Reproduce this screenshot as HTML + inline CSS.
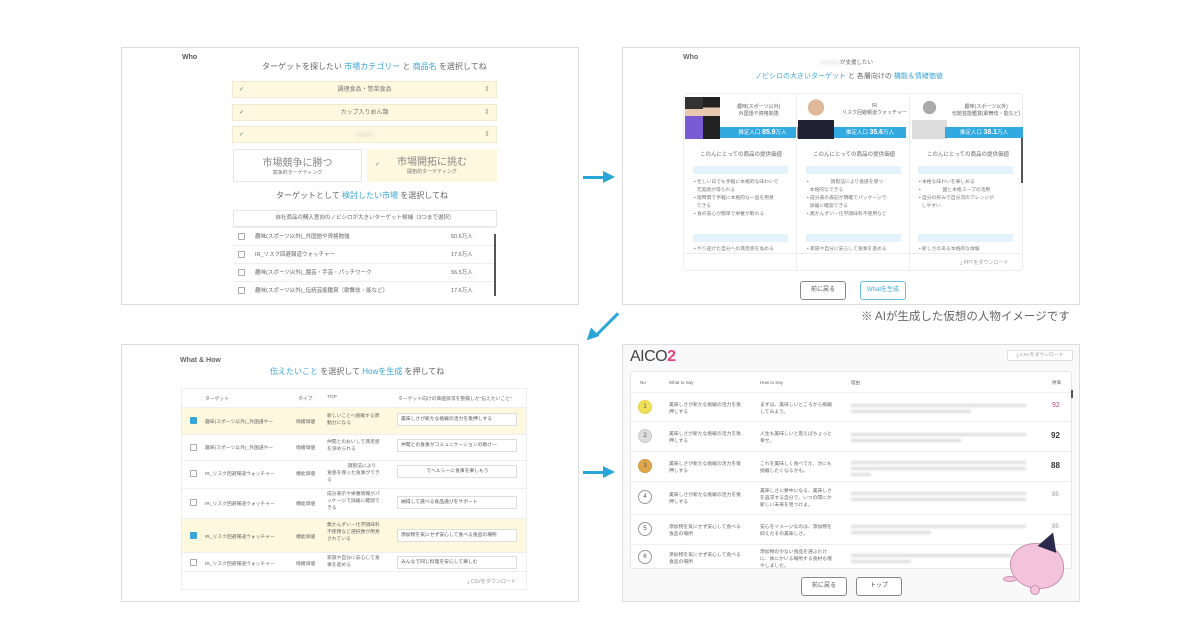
<!DOCTYPE html>
<html><head><meta charset="utf-8">
<style>
*{margin:0;padding:0;box-sizing:border-box}
body{width:1200px;height:630px;background:#fff;position:relative;overflow:hidden;font-family:"Liberation Sans","Noto Sans CJK JP",sans-serif;color:#555}
.a{position:absolute}
.panel{position:absolute;border:1px solid #ddd;background:#fff}
.t{position:absolute;font-size:7px;color:#666;white-space:nowrap}
.b{color:#3aa6d8}
.sel{position:absolute;left:232px;width:265px;height:17px;background:#fdf8de;border:1px solid #f0ead0;font-size:6px;text-align:center;line-height:16px;color:#777}
.sel:before{content:"✔";position:absolute;left:6px;color:#9a9;font-size:6px}
.sel:after{content:"⇕";position:absolute;right:6px;color:#999;font-size:7px}
.row{position:absolute;left:233px;width:262px;height:18px;border-top:1px solid #eee;font-size:5.5px;line-height:18px;color:#666}
.cb{position:absolute;width:7px;height:7px;border:1px solid #aaa;border-radius:1px;background:#fff}
.cbk{background:#3aa6d8;border-color:#3aa6d8}
.btn{position:absolute;height:19px;border:1px solid #888;border-radius:3px;font-size:6px;text-align:center;line-height:17px;color:#555;background:#fff}
.arrow{position:absolute;height:3px;background:#29a6d6}
.pb{background:#e3f2fb;position:absolute;height:8px}
.circ{position:absolute;width:14px;height:14px;border-radius:50%;border:1px solid #999;font-size:6px;text-align:center;line-height:12px;color:#555}
.blur{position:absolute;height:3px;background:#ddd;filter:blur(1px)}
</style></head><body>

<!-- Panel 1 -->
<div class="panel" style="left:121px;top:47px;width:458px;height:258px"></div>
<div class="t" style="left:182px;top:54px;font-size:7px;font-weight:bold;color:#555">Who</div>
<div class="t" style="left:262px;top:61px;font-size:8px">ターゲットを探したい <span class="b">市場カテゴリー</span> と <span class="b">商品名</span> を選択してね</div>
<div class="sel" style="top:81px">調理食品・惣菜食品</div>
<div class="sel" style="top:104px">カップ入りめん類</div>
<div class="sel" style="top:126px"><span style="filter:blur(2px)">○○○○○</span></div>
<div class="a" style="left:233px;top:149px;width:129px;height:33px;border:1px solid #e6e6e6;text-align:center;font-size:10px;color:#888;padding-top:4px">市場競争に勝つ<div style="font-size:5px;color:#777">競争的ターゲティング</div></div>
<div class="a" style="left:367px;top:149px;width:130px;height:33px;background:#fdf8de;text-align:center;font-size:10px;color:#888;padding-top:4px"><span style="position:absolute;left:8px;top:12px;font-size:6px;color:#9a9">✔</span>市場開拓に挑む<div style="font-size:5px;color:#777">開拓的ターゲティング</div></div>
<div class="t" style="left:276px;top:190px;font-size:8px">ターゲットとして <span class="b">検討したい市場</span> を選択してね</div>
<div class="a" style="left:233px;top:210px;width:264px;height:17px;border:1px solid #e6e6e6;font-size:5.5px;text-align:center;line-height:15px;color:#666">自社商品の購入意向のノビシロが大きいターゲット候補（3つまで選択）</div>
<div class="row" style="top:227px"><span class="cb" style="left:5px;top:5px"></span><span style="position:absolute;left:22px">趣味(スポーツ以外)_外国語や資格勉強</span><span style="position:absolute;left:218px">50.6万人</span></div>
<div class="row" style="top:245px"><span class="cb" style="left:5px;top:5px"></span><span style="position:absolute;left:22px">IR_リスク回避報道ウォッチャー</span><span style="position:absolute;left:218px">17.6万人</span></div>
<div class="row" style="top:263px"><span class="cb" style="left:5px;top:5px"></span><span style="position:absolute;left:22px">趣味(スポーツ以外)_園芸・手芸・パッチワーク</span><span style="position:absolute;left:218px">56.5万人</span></div>
<div class="row" style="top:281px"><span class="cb" style="left:5px;top:5px"></span><span style="position:absolute;left:22px">趣味(スポーツ以外)_伝統芸能鑑賞（歌舞伎・能など）</span><span style="position:absolute;left:218px">17.6万人</span></div>
<div class="a" style="left:494px;top:234px;width:2px;height:62px;background:#555"></div>

<!-- arrow 1 -->
<div class="arrow" style="left:583px;top:176px;width:22px"></div>
<div class="a" style="left:603px;top:171px;border-left:12px solid #29a6d6;border-top:6px solid transparent;border-bottom:6px solid transparent"></div>

<!-- Panel 2 -->
<div class="panel" style="left:622px;top:47px;width:458px;height:258px"></div>
<div class="t" style="left:683px;top:54px;font-weight:bold">Who</div>
<div class="t" style="left:820px;top:58px;font-size:5.5px"><span style="filter:blur(2px)">○○○○○○</span>が支援したい</div>
<div class="t" style="left:755px;top:71px;font-size:7px"><span class="b">ノビシロの大きいターゲット</span> と 各層向けの <span class="b">機能＆情緒価値</span></div>
<div class="a" style="left:683px;top:93px;width:340px;height:178px;border:1px solid #eee;border-radius:4px"></div>
<div class="a" style="left:685px;top:97px;width:18px;height:42px;background:linear-gradient(#333 0 28%,#e8c9b0 28% 45%,#7b5ad6 45%)"></div>
<div class="a" style="left:703px;top:97px;width:17px;height:42px;background:linear-gradient(#222 0 25%,#e8c9b0 25% 45%,#222 45%)"></div>
<div class="a" style="left:720px;top:127px;width:85px;height:11px;background:#32a9e0;color:#fff;font-size:5.5px;text-align:center;line-height:11px">推定人口 <b style="font-size:7px">85.9</b>万人</div>
<div class="t" style="left:737px;top:103px;font-size:5px;text-align:center">趣味(スポーツ以外)<br>外国語や資格勉強</div>
<div class="a" style="left:798px;top:97px;width:36px;height:42px;background:radial-gradient(circle at 50% 25%,#e0b99a 0 22%,transparent 23%),linear-gradient(transparent 0 55%,#223 55%)"></div>
<div class="a" style="left:834px;top:127px;width:72px;height:11px;background:#32a9e0;color:#fff;font-size:5.5px;text-align:center;line-height:11px">推定人口 <b style="font-size:7px">35.6</b>万人</div>
<div class="t" style="left:842px;top:103px;font-size:5px;text-align:center">IR<br>リスク回避報道ウォッチャー</div>
<div class="a" style="left:912px;top:97px;width:35px;height:42px;background:radial-gradient(circle at 50% 25%,#aaa 0 18%,transparent 19%),linear-gradient(transparent 0 55%,#ddd 55%)"></div>
<div class="a" style="left:945px;top:127px;width:78px;height:11px;background:#32a9e0;color:#fff;font-size:5.5px;text-align:center;line-height:11px">推定人口 <b style="font-size:7px">38.1</b>万人</div>
<div class="t" style="left:952px;top:103px;font-size:5px;text-align:center">趣味(スポーツ以外)<br>伝統芸能鑑賞(歌舞伎・能など)</div>
<div class="a" style="left:796px;top:95px;width:1px;height:175px;background:#eee"></div>
<div class="a" style="left:909px;top:95px;width:1px;height:175px;background:#eee"></div>
<div class="t" style="left:700px;top:150px;font-size:5.5px">このんにとっての商品の提供価値</div>
<div class="t" style="left:813px;top:150px;font-size:5.5px">このんにとっての商品の提供価値</div>
<div class="t" style="left:927px;top:150px;font-size:5.5px">このんにとっての商品の提供価値</div>
<div class="pb" style="left:693px;top:166px;width:95px"></div>
<div class="pb" style="left:806px;top:166px;width:95px"></div>
<div class="pb" style="left:918px;top:166px;width:95px"></div>
<div class="t" style="left:694px;top:179px;font-size:4.8px;line-height:8px;color:#777">• 忙しい日でも手軽に本格的な味わいで<br>&nbsp; 充実感が得られる<br>• 短時間で手軽に本格的な一皿を用意<br>&nbsp; できる<br>• 食の安心が簡単で栄養が取れる</div>
<div class="t" style="left:807px;top:179px;font-size:4.8px;line-height:8px;color:#777">• 　　　　 調製法により食感を保つ<br>&nbsp; 本格的なできる<br>• 成分表の表記が明確でパッケージで<br>&nbsp; 詳細に確認できる<br>• 無かんずい・化学調味料不使用など</div>
<div class="t" style="left:919px;top:179px;font-size:4.8px;line-height:8px;color:#777">• 本格な味わいを楽しめる<br>• 　　　　 国と本格スープの活用<br>• 自分の好みで自分流のアレンジが<br>&nbsp; しやすい</div>
<div class="pb" style="left:693px;top:234px;width:95px"></div>
<div class="pb" style="left:806px;top:234px;width:95px"></div>
<div class="pb" style="left:918px;top:234px;width:95px"></div>
<div class="t" style="left:694px;top:245px;font-size:4.8px;color:#777">• やり遂げた自分への満足感を高める</div>
<div class="t" style="left:807px;top:245px;font-size:4.8px;color:#777">• 家族や自分に安心して食事を進める</div>
<div class="t" style="left:919px;top:245px;font-size:4.8px;color:#777">• 新しさのある本格的な体験</div>
<div class="a" style="left:1021px;top:138px;width:1.5px;height:45px;background:#555"></div>
<div class="a" style="left:685px;top:253px;width:336px;height:1px;background:#eee"></div>
<div class="t" style="left:960px;top:259px;font-size:5px;color:#999">⤓ PPTをダウンロード</div>
<div class="btn" style="left:800px;top:281px;width:46px">前に戻る</div>
<div class="btn" style="left:860px;top:281px;width:46px;border-color:#6bbbe0;color:#3aa6d8">Whatを生成</div>
<div class="t" style="left:861px;top:308px;font-size:11.5px;color:#666">※ AIが生成した仮想の人物イメージです</div>

<!-- diagonal arrow -->
<div class="a" style="width:30px;height:3px;background:#29a6d6;transform:rotate(-45deg);transform-origin:left center;left:597px;top:333px"></div>
<div class="a" style="left:585px;top:330px;width:0;height:0;border-right:12px solid #29a6d6;border-top:6px solid transparent;border-bottom:6px solid transparent;transform:rotate(-45deg)"></div>

<!-- Panel 3 -->
<div class="panel" style="left:121px;top:344px;width:458px;height:258px"></div>
<div class="t" style="left:180px;top:357px;font-weight:bold">What &amp; How</div>
<div class="t" style="left:270px;top:366px;font-size:8px"><span class="b">伝えたいこと</span> を選択して <span class="b">Howを生成</span> を押してね</div>
<div class="a" style="left:181px;top:388px;width:346px;height:202px;border:1px solid #eee"></div>
<div class="t" style="left:205px;top:395px;font-size:4.8px">ターゲット</div>
<div class="t" style="left:298px;top:395px;font-size:4.8px">タイプ</div>
<div class="t" style="left:327px;top:395px;font-size:4.8px">TOP</div>
<div class="t" style="left:398px;top:395px;font-size:4.8px">ターゲット向けの価値訴求を整備した"伝えたいこと"</div>
<div class="a" style="left:182px;top:407px;width:344px;height:27px;background:#fdf8de;border-top:1px solid #eee"></div>
<div class="a" style="left:182px;top:434px;width:344px;height:26px;border-top:1px solid #eee"></div>
<div class="a" style="left:182px;top:460px;width:344px;height:28px;border-top:1px solid #eee"></div>
<div class="a" style="left:182px;top:488px;width:344px;height:30px;border-top:1px solid #eee"></div>
<div class="a" style="left:182px;top:518px;width:344px;height:34px;background:#fdf8de;border-top:1px solid #eee"></div>
<div class="a" style="left:182px;top:552px;width:344px;height:20px;border-top:1px solid #eee;border-bottom:1px solid #eee"></div>
<div class="cb cbk" style="left:190px;top:417px"></div>
<div class="cb" style="left:190px;top:444px"></div>
<div class="cb" style="left:190px;top:470px"></div>
<div class="cb" style="left:190px;top:499px"></div>
<div class="cb cbk" style="left:190px;top:532px"></div>
<div class="cb" style="left:190px;top:559px"></div>
<div class="t" style="left:205px;top:418px;font-size:4.8px">趣味(スポーツ以外)_外国語やー</div>
<div class="t" style="left:205px;top:444px;font-size:4.8px">趣味(スポーツ以外)_外国語やー</div>
<div class="t" style="left:205px;top:470px;font-size:4.8px">IR_リスク回避報道ウォッチャー</div>
<div class="t" style="left:205px;top:500px;font-size:4.8px">IR_リスク回避報道ウォッチャー</div>
<div class="t" style="left:205px;top:533px;font-size:4.8px">IR_リスク回避報道ウォッチャー</div>
<div class="t" style="left:205px;top:560px;font-size:4.8px">IR_リスク回避報道ウォッチャー</div>
<div class="t" style="left:296px;top:418px;font-size:4.8px">情緒価値</div><div class="t" style="left:296px;top:444px;font-size:4.8px">情緒価値</div><div class="t" style="left:296px;top:470px;font-size:4.8px">機能価値</div><div class="t" style="left:296px;top:500px;font-size:4.8px">機能価値</div><div class="t" style="left:296px;top:533px;font-size:4.8px">機能価値</div><div class="t" style="left:296px;top:560px;font-size:4.8px">情緒価値</div>
<div class="t" style="left:327px;top:413px;font-size:4.8px;line-height:7px">新しいことへ挑戦する原<br>動力になる</div>
<div class="t" style="left:327px;top:439px;font-size:4.8px;line-height:7px">仲間とのおいしで満足感<br>を深められる</div>
<div class="t" style="left:327px;top:463px;font-size:4.8px;line-height:7px">　　　　 調製法により<br>食感を保った食事ができ<br>る</div>
<div class="t" style="left:327px;top:491px;font-size:4.8px;line-height:7px">成分表示や栄養情報がパ<br>ッケージで詳細に確認で<br>きる</div>
<div class="t" style="left:327px;top:522px;font-size:4.8px;line-height:7px">無かんずい・化学調味料<br>不使用など選択肢が用意<br>されている</div>
<div class="t" style="left:327px;top:555px;font-size:4.8px;line-height:7px">家族や自分に安心して食<br>事を進める</div>
<div class="a" style="left:397px;top:413px;width:120px;height:13px;border:1px solid #ddd;background:#fff;font-size:4.8px;line-height:11px;padding-left:3px">美味しさが新たな挑戦の活力を後押しする</div>
<div class="a" style="left:397px;top:439px;width:120px;height:13px;border:1px solid #ddd;background:#fff;font-size:4.8px;line-height:11px;padding-left:3px">仲間との食事がコミュニケーションの助け—</div>
<div class="a" style="left:397px;top:465px;width:120px;height:13px;border:1px solid #ddd;background:#fff;font-size:4.8px;line-height:11px;padding-left:3px">　　　　　 でヘルシーに食事を楽しもう</div>
<div class="a" style="left:397px;top:496px;width:120px;height:13px;border:1px solid #ddd;background:#fff;font-size:4.8px;line-height:11px;padding-left:3px">納得して選べる食品選びをサポート</div>
<div class="a" style="left:397px;top:529px;width:120px;height:13px;border:1px solid #ddd;background:#fff;font-size:4.8px;line-height:11px;padding-left:3px">添加物を気にせず安心して食べる食品の場所</div>
<div class="a" style="left:397px;top:556px;width:120px;height:13px;border:1px solid #ddd;background:#fff;font-size:4.8px;line-height:11px;padding-left:3px">みんなで同じ料理を安心して楽しむ</div>
<div class="t" style="left:467px;top:578px;font-size:5px;color:#999">⤓ CSVをダウンロード</div>

<!-- arrow 2 -->
<div class="arrow" style="left:583px;top:471px;width:22px"></div>
<div class="a" style="left:603px;top:466px;border-left:12px solid #29a6d6;border-top:6px solid transparent;border-bottom:6px solid transparent"></div>

<!-- Panel 4 -->
<div class="panel" style="left:622px;top:344px;width:458px;height:258px;background:#f9f9f9"></div>
<div class="t" style="left:630px;top:348px;font-size:16px;color:#444;letter-spacing:-0.5px">AICO<span style="color:#e2457e;font-weight:bold">2</span></div>
<div class="a" style="left:1007px;top:350px;width:66px;height:11px;border:1px solid #ddd;background:#fff;font-size:4.8px;line-height:9px;text-align:center;color:#999">⤓ CSVをダウンロード</div>
<div class="a" style="left:630px;top:371px;width:442px;height:198px;background:#fff;border:1px solid #e6e6e6;border-radius:3px"></div>
<div class="t" style="left:640px;top:380px;font-size:4.5px">No</div>
<div class="t" style="left:669px;top:380px;font-size:4.5px">What to Say</div>
<div class="t" style="left:760px;top:380px;font-size:4.5px">How to Say</div>
<div class="t" style="left:851px;top:380px;font-size:4.5px">理由</div>
<div class="t" style="left:1052px;top:380px;font-size:4.5px">評価</div>
<div class="a" style="left:631px;top:392px;width:440px;height:1px;background:#eee"></div>
<div class="a" style="left:631px;top:421px;width:440px;height:1px;background:#eee"></div>
<div class="a" style="left:631px;top:451px;width:440px;height:1px;background:#eee"></div>
<div class="a" style="left:631px;top:481px;width:440px;height:1px;background:#eee"></div>
<div class="a" style="left:631px;top:514px;width:440px;height:1px;background:#eee"></div>
<div class="a" style="left:631px;top:544px;width:440px;height:1px;background:#eee"></div>
<div class="circ" style="left:638px;top:400px;background:#efe05a;border-color:#e6d54a">1</div>
<div class="circ" style="left:638px;top:429px;background:#ddd;border-color:#ccc">2</div>
<div class="circ" style="left:638px;top:459px;background:#e0a84e;border-color:#d39a40">3</div>
<div class="circ" style="left:638px;top:490px">4</div>
<div class="circ" style="left:638px;top:522px">5</div>
<div class="circ" style="left:638px;top:550px">6</div>
<div class="t" style="left:669px;top:402px;font-size:4.8px;line-height:7px">美味しさが新たな挑戦の活力を後<br>押しする</div>
<div class="t" style="left:669px;top:431px;font-size:4.8px;line-height:7px">美味しさが新たな挑戦の活力を後<br>押しする</div>
<div class="t" style="left:669px;top:461px;font-size:4.8px;line-height:7px">美味しさが新たな挑戦の活力を後<br>押しする</div>
<div class="t" style="left:669px;top:492px;font-size:4.8px;line-height:7px">美味しさが新たな挑戦の活力を後<br>押しする</div>
<div class="t" style="left:669px;top:524px;font-size:4.8px;line-height:7px">添加物を気にせず安心して食べる<br>食品の場所</div>
<div class="t" style="left:669px;top:552px;font-size:4.8px;line-height:7px">添加物を気にせず安心して食べる<br>食品の場所</div>
<div class="t" style="left:760px;top:402px;font-size:4.8px;line-height:7px">まずは、美味しいところから挑戦<br>してみよう。</div>
<div class="t" style="left:760px;top:431px;font-size:4.8px;line-height:7px">人生も美味しいと思えばちょっと<br>幸せ。</div>
<div class="t" style="left:760px;top:461px;font-size:4.8px;line-height:7px">これを美味しく食べてた、次にも<br>挑戦したくなるかも。</div>
<div class="t" style="left:760px;top:488px;font-size:4.8px;line-height:7px">美味しさに夢中になる、美味しさ<br>を追求する自分で、いつの間にか<br>新しい未来を見つけよ。</div>
<div class="t" style="left:760px;top:524px;font-size:4.8px;line-height:7px">安心をイメージなのは、添加物を<br>抑えたその美味しさ。</div>
<div class="t" style="left:760px;top:549px;font-size:4.8px;line-height:7px">添加物の少ない食品を選ぶだけ<br>に、体にかいる場所する食材も増<br>やしました。</div>
<div class="blur" style="left:851px;top:404px;width:175px"></div><div class="blur" style="left:851px;top:410px;width:120px"></div>
<div class="blur" style="left:851px;top:433px;width:175px"></div><div class="blur" style="left:851px;top:439px;width:110px"></div>
<div class="blur" style="left:851px;top:461px;width:175px"></div><div class="blur" style="left:851px;top:467px;width:175px"></div><div class="blur" style="left:851px;top:473px;width:20px"></div>
<div class="blur" style="left:851px;top:492px;width:175px"></div><div class="blur" style="left:851px;top:498px;width:175px"></div>
<div class="blur" style="left:851px;top:525px;width:175px"></div><div class="blur" style="left:851px;top:531px;width:80px"></div>
<div class="blur" style="left:851px;top:554px;width:160px"></div><div class="blur" style="left:851px;top:560px;width:60px"></div>
<div class="t" style="left:1052px;top:402px;font-size:7px;color:#c44a6a">92</div>
<div class="t" style="left:1051px;top:431px;font-size:8px;color:#333;font-weight:bold">92</div>
<div class="t" style="left:1051px;top:461px;font-size:8px;color:#333;font-weight:bold">88</div>
<div class="t" style="left:1052px;top:492px;font-size:6px;color:#999">85</div>
<div class="t" style="left:1052px;top:524px;font-size:6px;color:#999">85</div>
<div class="a" style="left:1071px;top:390px;width:2px;height:8px;background:#555"></div>
<div class="btn" style="left:801px;top:577px;width:46px">前に戻る</div>
<div class="btn" style="left:856px;top:577px;width:46px">トップ</div>
<!-- character -->
<div class="a" style="left:1010px;top:543px;width:54px;height:46px;border-radius:48% 52% 45% 55%;background:#f3c3dc;border:1px solid #c990b0"></div>
<div class="a" style="left:1040px;top:532px;width:0;height:0;border-left:10px solid transparent;border-right:10px solid transparent;border-bottom:18px solid #2c2a4a;transform:rotate(20deg)"></div>
<div class="a" style="left:1003px;top:576px;width:14px;height:6px;border-radius:50%;background:#f3c3dc;border:1px solid #c990b0"></div>
<div class="a" style="left:1030px;top:585px;width:10px;height:10px;border-radius:50%;background:#f3c3dc;border:1px solid #c990b0"></div>
</body></html>
